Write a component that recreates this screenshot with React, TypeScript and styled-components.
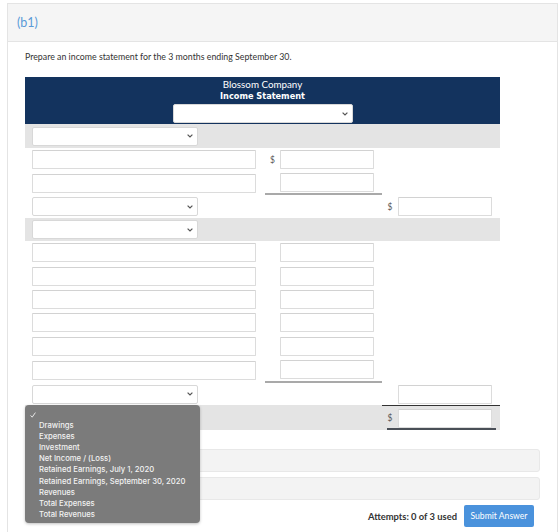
import React from "react";
import styled, { createGlobalStyle } from "styled-components";

const GlobalStyle = createGlobalStyle`
  body {
    margin: 0;
    background: #fff;
    font-family: Lato, "Open Sans", sans-serif;
    color: #333;
  }
`;

const Page = styled.div`
  position: relative;
  height: 532px;
  overflow: hidden;
  padding: 3px 2px 0 7px;
`;

const Panel = styled.div`
  border: 1px solid #e4e4e4;
  height: 600px;
`;

const PanelHeader = styled.div`
  height: 37px;
  background: #f5f5f5;
  border-bottom: 1px solid #e4e4e4;
  display: flex;
  align-items: center;
  padding-left: 9px;
  font-size: 12.5px;
  color: #5a9ad8;
`;

const PanelBody = styled.div`
  padding: 9px 23px 0 17px;
`;

const Prompt = styled.p`
  margin: 0 0 14px 0;
  font-size: 8.8px;
  line-height: 12px;
  color: #333;
`;

const Statement = styled.div`
  width: 475px;
`;

const StatementHead = styled.div`
  height: 47px;
  background: #13335e;
  color: #fff;
  display: flex;
  flex-direction: column;
  align-items: center;
  padding-top: 2px;
  box-sizing: border-box;
`;

const HeadLine = styled.div<{ bold?: boolean }>`
  font-family: ${({ bold }) => (bold ? `"DejaVu Sans", Verdana, sans-serif` : `Lato, sans-serif`)};
  font-size: ${({ bold }) => (bold ? "8.2px" : "9.8px")};
  line-height: 11.5px;
  font-weight: ${({ bold }) => (bold ? 700 : 400)};
`;

const HeadSelectSlot = styled.div`
  margin-top: 2px;
`;

const Row = styled.div<{ shaded?: boolean; h: number }>`
  display: grid;
  grid-template-columns: 240px 117px 118px;
  align-items: stretch;
  height: ${({ h }) => h}px;
  background: ${({ shaded }) => (shaded ? "#e4e4e4" : "transparent")};
`;

const NameCell = styled.div`
  display: flex;
  align-items: center;
  padding-left: 7px;
`;

const AmountCell = styled.div<{ under?: "gray" | "total"; over?: boolean }>`
  display: flex;
  align-items: center;
  box-sizing: border-box;
  border-top: ${({ over }) => (over ? "1px solid #333" : "none")};
  border-bottom: ${({ under }) => (under === "gray" ? "2px solid #a9a9a9" : "none")};
  position: relative;

  &::after {
    content: "";
    display: ${({ under }) => (under === "total" ? "block" : "none")};
    position: absolute;
    left: 5px;
    right: 4px;
    bottom: 0;
    height: 2px;
    background: #4a4f57;
  }
`;

const Dollar = styled.span<{ w: number }>`
  width: ${({ w }) => w}px;
  font-size: 8.5px;
  color: #555;
  text-align: center;
`;

const TextBox = styled.div<{ w: number }>`
  width: ${({ w }) => w}px;
  height: 19px;
  box-sizing: border-box;
  background: #fff;
  border: 1px solid #dcdcdc;
  border-top-color: #d2d2d2;
  border-radius: 1px;
`;

const SelectBox = styled.div<{ w: number }>`
  width: ${({ w }) => w}px;
  height: 19px;
  box-sizing: border-box;
  background: #fff;
  border: 1px solid #d8d8d8;
  border-radius: 2px;
  display: flex;
  align-items: center;
  justify-content: flex-end;
  padding-right: 4px;
`;

const Chevron = () => (
  <svg width="6" height="4" viewBox="0 0 6 4">
    <path d="M0.6 0.6 L3 3 L5.4 0.6" fill="none" stroke="#555" strokeWidth="1.2" />
  </svg>
);

const Select = ({ w }: { w: number }) => (
  <SelectBox w={w}>
    <Chevron />
  </SelectBox>
);

const HintBox = styled.div`
  width: 515px;
  height: 23px;
  box-sizing: border-box;
  background: #f3f3f3;
  border: 1px solid #e8e8e8;
  border-radius: 3px;
  margin-bottom: 5px;
`;

const Footer = styled.div`
  display: flex;
  justify-content: flex-end;
  align-items: center;
  gap: 7px;
  width: 509px;
  margin-top: 1px;
`;

const Attempts = styled.span`
  font-size: 9.4px;
  font-weight: 700;
  color: #333;
`;

const SubmitButton = styled.button`
  width: 70px;
  height: 22px;
  border: none;
  border-radius: 2px;
  background: #4a92dc;
  color: #fff;
  font-family: Lato, sans-serif;
  font-size: 8.6px;
  padding: 0;
`;

const Popup = styled.div`
  position: absolute;
  left: 25px;
  top: 405px;
  width: 175px;
  height: 118px;
  box-sizing: border-box;
  background: #7b7b7b;
  border-radius: 4px;
  padding: 4px 0 0 5px;
  box-shadow: 0 1px 3px rgba(0, 0, 0, 0.25);
  font-family: Inter, "Liberation Sans", Arial, sans-serif;
  color: #f2f2f2;
`;

const Option = styled.div<{ check?: boolean }>`
  height: 11.1px;
  line-height: 11.1px;
  font-size: 7.7px;
  font-weight: 500;
  padding-left: ${({ check }) => (check ? "0" : "9px")};
  white-space: nowrap;
  display: flex;
  align-items: center;
`;

const CheckMark = () => (
  <svg width="6" height="6" viewBox="0 0 6 6">
    <path d="M0.6 3.4 L2.2 5.2 L5.4 0.6" fill="none" stroke="#f2f2f2" strokeWidth="0.9" />
  </svg>
);

const options = [
  "Drawings",
  "Expenses",
  "Investment",
  "Net Income / (Loss)",
  "Retained Earnings, July 1, 2020",
  "Retained Earnings, September 30, 2020",
  "Revenues",
  "Total Expenses",
  "Total Revenues",
];

const listRows = [23, 24, 23, 23, 24, 23];

export default function App() {
  return (
    <Page>
      <GlobalStyle />
      <Panel>
        <PanelHeader>(b1)</PanelHeader>
        <PanelBody>
          <Prompt>Prepare an income statement for the 3 months ending September 30.</Prompt>
          <Statement>
            <StatementHead>
              <HeadLine>Blossom Company</HeadLine>
              <HeadLine bold>Income Statement</HeadLine>
              <HeadSelectSlot>
                <Select w={180} />
              </HeadSelectSlot>
            </StatementHead>

            <Row shaded h={24}>
              <NameCell><Select w={166} /></NameCell>
              <div />
              <div />
            </Row>
            <Row h={23}>
              <NameCell><TextBox w={224} /></NameCell>
              <AmountCell><Dollar w={15}>$</Dollar><TextBox w={94} /></AmountCell>
              <div />
            </Row>
            <Row h={24}>
              <NameCell><TextBox w={224} /></NameCell>
              <AmountCell under="gray"><Dollar w={15} /><TextBox w={94} /></AmountCell>
              <div />
            </Row>
            <Row h={23}>
              <NameCell><Select w={166} /></NameCell>
              <div />
              <AmountCell><Dollar w={16}>$</Dollar><TextBox w={94} /></AmountCell>
            </Row>
            <Row shaded h={23}>
              <NameCell><Select w={166} /></NameCell>
              <div />
              <div />
            </Row>
            {listRows.map((h, i) => (
              <Row key={i} h={i === listRows.length - 1 ? h + 2 : h}>
                <NameCell><TextBox w={224} /></NameCell>
                <AmountCell under={i === listRows.length - 1 ? "gray" : undefined}>
                  <Dollar w={15} />
                  <TextBox w={94} />
                </AmountCell>
                <div />
              </Row>
            ))}
            <Row h={22}>
              <NameCell><Select w={166} /></NameCell>
              <div />
              <AmountCell><Dollar w={16} /><TextBox w={94} /></AmountCell>
            </Row>
            <Row shaded h={25}>
              <NameCell><Select w={166} /></NameCell>
              <div />
              <AmountCell over under="total"><Dollar w={16}>$</Dollar><TextBox w={94} /></AmountCell>
            </Row>
          </Statement>

          <div style={{ height: 19 }} />
          <HintBox />
          <HintBox />
          <Footer>
            <Attempts>Attempts: 0 of 3 used</Attempts>
            <SubmitButton>Submit Answer</SubmitButton>
          </Footer>
        </PanelBody>
      </Panel>

      <Popup>
        <Option check><CheckMark /></Option>
        {options.map((o) => (
          <Option key={o}>{o}</Option>
        ))}
      </Popup>
    </Page>
  );
}
